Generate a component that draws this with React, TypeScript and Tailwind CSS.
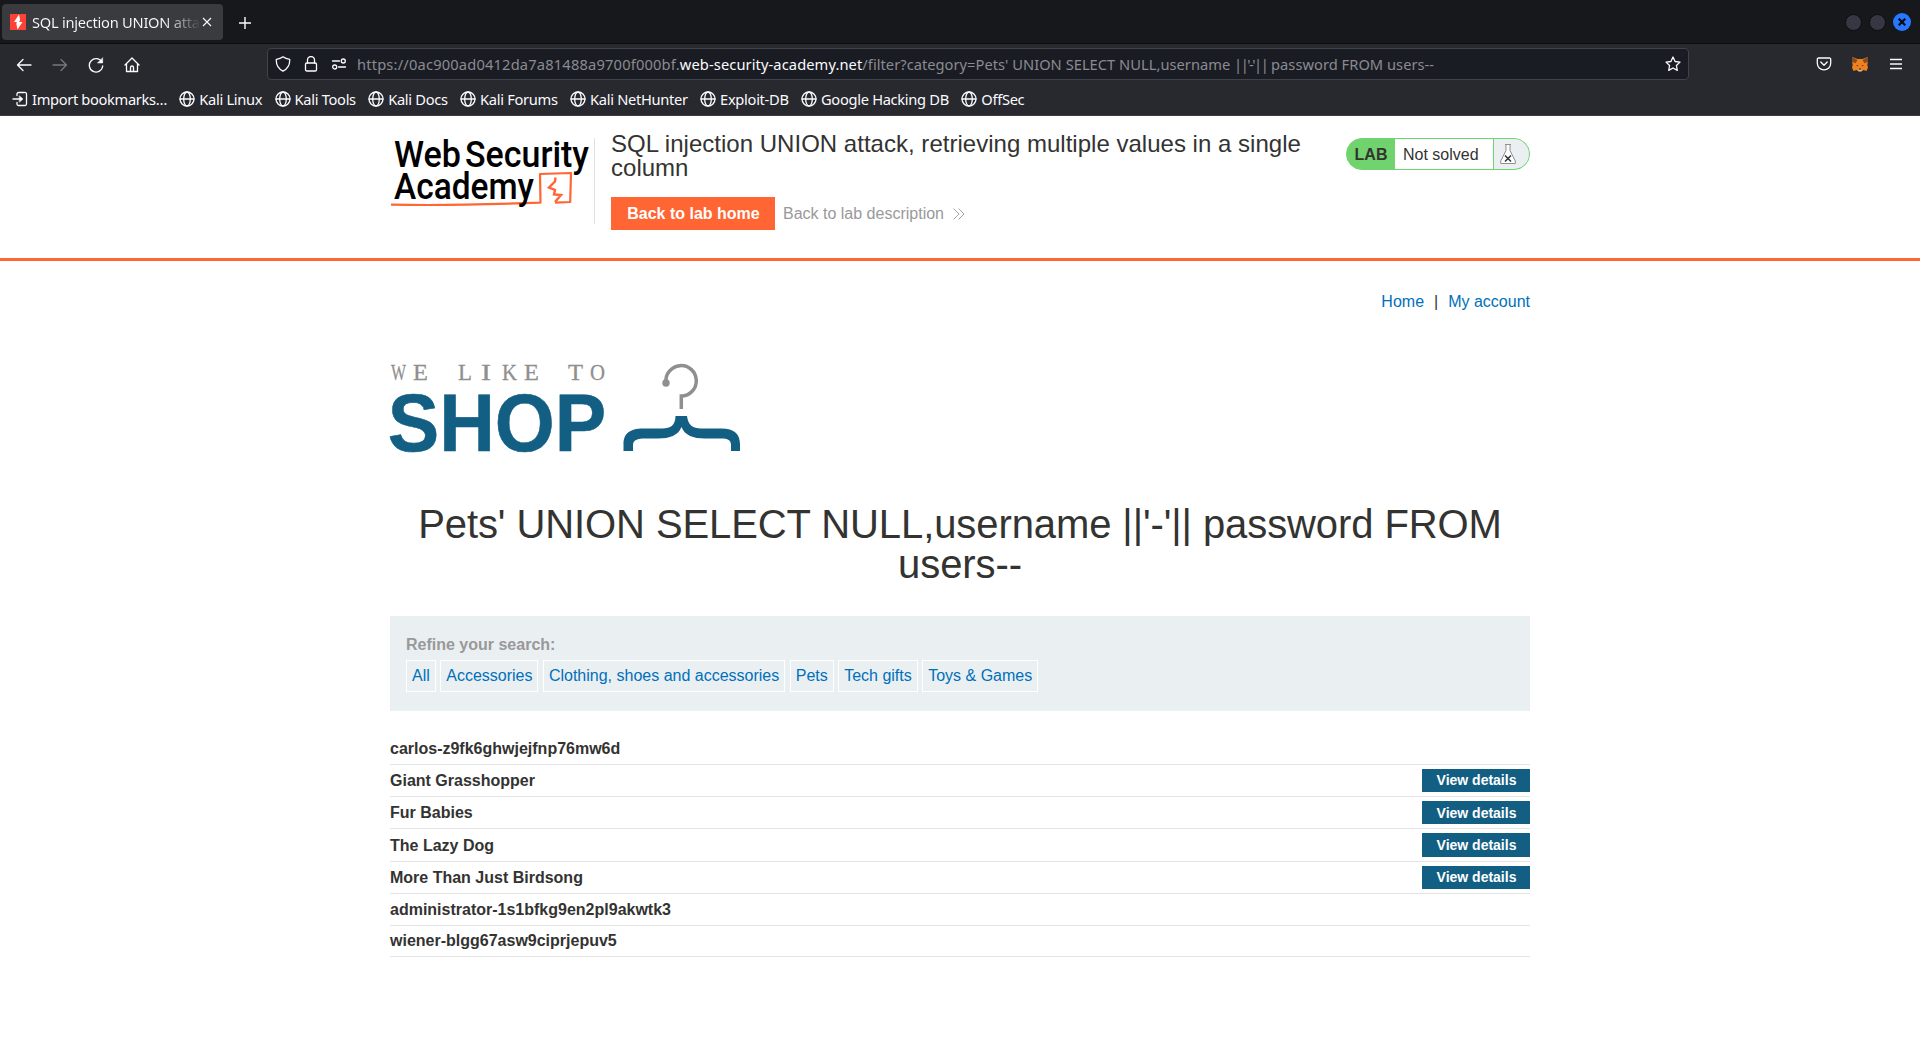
import type { ReactNode } from "react";

const bookmarks = [
  "Kali Linux",
  "Kali Tools",
  "Kali Docs",
  "Kali Forums",
  "Kali NetHunter",
  "Exploit-DB",
  "Google Hacking DB",
  "OffSec",
];

const categories = [
  "All",
  "Accessories",
  "Clothing, shoes and accessories",
  "Pets",
  "Tech gifts",
  "Toys & Games",
];

const rows = [
  { name: "carlos-z9fk6ghwjejfnp76mw6d", details: false, size: "h-8", button: "" },
  { name: "Giant Grasshopper", details: true, size: "h-8", button: "h-[23px] leading-[22px]" },
  { name: "Fur Babies", details: true, size: "h-8", button: "h-[23px] leading-6" },
  { name: "The Lazy Dog", details: true, size: "h-[33px] pt-px", button: "mb-px h-6 leading-6" },
  { name: "More Than Just Birdsong", details: true, size: "h-8", button: "h-[23px] leading-[22px]" },
  { name: "administrator-1s1bfkg9en2pl9akwtk3", details: false, size: "h-8", button: "" },
  { name: "wiener-blgg67asw9ciprjepuv5", details: false, size: "h-[31px]", button: "" },
];

function Icon({ children, className = "" }: { children: ReactNode; className?: string }) {
  return (
    <svg
      viewBox="0 0 16 16"
      className={`size-4 shrink-0 ${className}`}
      fill="none"
      stroke="currentColor"
      strokeWidth="1.3"
      strokeLinecap="round"
      strokeLinejoin="round"
    >
      {children}
    </svg>
  );
}

function Globe() {
  return (
    <Icon>
      <circle cx="8" cy="8" r="7" />
      <ellipse cx="8" cy="8" rx="3.3" ry="7" />
      <path d="M1 8h14" />
    </Icon>
  );
}

function TabStrip() {
  return (
    <div className="flex h-11 items-start justify-between border-b border-[#0c0c10] bg-[#17181c]">
      <div className="flex">
        <div className="mt-1 ml-0.5 flex h-9 w-[221px] items-center rounded bg-[#3a3b3f] pl-2">
          <svg viewBox="0 0 16 16" className="size-4 shrink-0">
            <rect width="16" height="16" fill="#ff4236" />
            <path d="M9 0.5L4 8h3.2L6.3 9.8 7.5 15.5 12.5 8H9.2l1-2z" fill="#fff" />
            <path d="M6.500 8L9 8.200 8 11" fill="none" stroke="#fff" />
          </svg>
          <div className="ml-[6px] w-[169px] overflow-hidden whitespace-nowrap bg-linear-to-r from-[#fbfbfe] from-78% to-transparent to-100% bg-clip-text tracking-[-0.26px] text-transparent">
            SQL injection UNION attack, retrieving
          </div>
          <svg viewBox="0 0 10 10" className="ml-px size-2.5 shrink-0" stroke="#fbfbfe" strokeWidth="1.1">
            <path d="M1 1l8 8M9 1L1 9" />
          </svg>
        </div>
        <svg viewBox="0 0 12 12" className="mt-[17px] ml-4 size-3" stroke="#fbfbfe" strokeWidth="1.4">
          <path d="M6 0v12M0 6h12" />
        </svg>
      </div>
      <div className="mt-[13px] mr-[9px] flex items-center gap-[7px]">
        <span className="size-[17px] rounded-full border border-[#0c0c10] bg-[#363742]" />
        <span className="size-[17px] rounded-full border border-[#0c0c10] bg-[#363742]" />
        <span className="flex size-[18px] items-center justify-center rounded-full bg-[#2777ff]">
          <svg viewBox="0 0 8 8" className="size-2" stroke="#0c0c10" strokeWidth="2.2">
            <path d="M0.7 0.7l6.6 6.6M7.3 0.7L0.7 7.3" />
          </svg>
        </span>
      </div>
    </div>
  );
}

function Toolbar() {
  return (
    <div className="flex h-10 items-center">
      <div className="flex w-[267px] items-center gap-5 pl-4 pt-px">
        <Icon><path d="M15 8H1.5M7 2.5L1.5 8 7 13.5" /></Icon>
        <Icon className="text-[#77777b]"><path d="M1 8h13.500M9 2.500L14.500 8 9 13.500" /></Icon>
        <Icon>
          <path d="M14 5.300A6.700 6.700 0 1 0 14.700 9" />
          <path d="M14.700 1v5H9.700z" fill="currentColor" strokeWidth=".5" />
        </Icon>
        <Icon>
          <path d="M1 8L8 1l7 7M2.500 7v7.500h11V7M6.500 14.500V10.500a1.500 1.500 0 0 1 3 0v4" />
        </Icon>
      </div>
      <div className="flex h-8 w-[1422px] items-center rounded border border-[#42434a] bg-[#1a1c23] pr-[7px] pl-[7px]">
        <Icon><path d="M8 .8C10 2.400 12 3 14.700 3.300 15 8.500 12.500 13 8 15.200 3.500 13 1 8.500 1.300 3.300 4 3 6 2.400 8 .8z" /></Icon>
        <Icon className="ml-3">
          <rect x="2.500" y="7" width="11" height="8" rx="1.300" />
          <path d="M4.500 7V4a3.500 3.500 0 0 1 7 0v3" />
        </Icon>
        <Icon className="ml-3">
          <path d="M1.500 5h7M7.500 11h7" />
          <circle cx="12.300" cy="5" r="2" />
          <circle cx="3.700" cy="11" r="2" />
        </Icon>
        <div className="ml-[10px] flex-1 whitespace-pre text-[#8b8b91]">
          <span className="tracking-[0.18px]">https://0ac900ad0412da7a81488a9700f000bf.</span>
          <span className="tracking-[0.1px] text-[#fbfbfe]">web-security-academy.net</span>
          <span className="tracking-[0.03px]">{"/filter?category=Pets' UNION SELECT NULL,username "}</span>
          <span className="tracking-[-1.5px]">{"||'-'||"}</span>
          <span className="tracking-[0.03px]">{" password FROM users--"}</span>
        </div>
        <Icon>
          <path d="M8 1l2.100 4.500 4.900.6-3.600 3.400.9 4.900L8 12l-4.300 2.400.9-4.900L1 6.100l4.900-.6z" />
        </Icon>
      </div>
      <div className="ml-auto flex items-center gap-5 pr-4">
        <Icon>
          <path d="M2.500 2h11a1.200 1.200 0 0 1 1.200 1.200v4a6.700 6.700 0 0 1-13.400 0v-4A1.200 1.200 0 0 1 2.500 2zM4.800 6L8 9.200 11.200 6" />
        </Icon>
        <svg viewBox="0 0 16 16" className="size-4">
          <path d="M0 1l5.500 2h5L16 1v4.500L15.300 9l.7 2.500-1.500 3.500-3-1L9.500 15.500h-3L4.500 14l-3 1L0 11.500.7 9 0 5.500z" fill="#f0811f" />
          <path d="M0 1l5.500 3L3.500 7.200 0 6zM16 1l-5.500 3 2 3.200L16 6z" fill="#8a4a20" />
          <path d="M3.800 9l2.500.5L6 10.600zM12.200 9l-2.500.5.3 1.100z" fill="#2f3840" />
          <path d="M6.300 13h3.400l-.3 2.300H6.600z" fill="#d5c3b4" />
          <path d="M6.800 12.500h2.400v1.200H6.800z" fill="#2f3840" />
        </svg>
        <Icon><path d="M2 3.500h12M2 8h12M2 12.500h12" strokeLinecap="butt" /></Icon>
      </div>
    </div>
  );
}

function Bookmarks() {
  return (
    <div className="flex h-8 items-center gap-[12.3px] border-b border-[#3e3a45] pb-px pl-3 tracking-[-0.3px] whitespace-nowrap">
      <div className="flex items-center gap-1 tracking-[-0.34px]">
        <Icon>
          <path d="M5 4.500V3a1.500 1.500 0 0 1 1.500-1.500h6A1.500 1.500 0 0 1 14.500 3v10a1.500 1.500 0 0 1-1.500 1.500H6.500A1.500 1.500 0 0 1 5 13v-1.500M1 8h8" />
          <path d="M7.500 5L11 8l-3.500 3z" fill="currentColor" strokeWidth=".6" />
        </Icon>
        Import bookmarks…
      </div>
      {bookmarks.map((b) => (
        <div key={b} className="flex items-center gap-1">
          <Globe />
          {b}
        </div>
      ))}
    </div>
  );
}

function AcademyLogo() {
  return (
    <svg viewBox="0 0 204 86" className="h-[86px] w-[204px] shrink-0 overflow-visible" fontFamily="Roboto, sans-serif" fontWeight="500" fontSize="37">
      <path d="M1 66.600c40 1 90 .2 149.500-2L150 36l31-1-.8 29-15.200.7" fill="none" stroke="#ff6633" strokeWidth="2.200" strokeLinejoin="round" />
      <path d="M165.500 39.500L165 43.500 159 49.500 165 52 164 56.500 171 57 165 64" fill="none" stroke="#ff6633" strokeWidth="2.400" />
      <text x="4" y="28.500" textLength="67" lengthAdjust="spacingAndGlyphs">Web</text>
      <text x="75" y="28.500" textLength="124" lengthAdjust="spacingAndGlyphs">Security</text>
      <text x="4" y="61" textLength="140" lengthAdjust="spacingAndGlyphs">Academy</text>
    </svg>
  );
}

function LabHeader() {
  return (
    <header className="h-[145px] border-b-3 border-[#ff6633]">
      <div className="mx-auto flex w-[1140px]">
        <div className="mt-[22px] h-[86px] w-[205px] border-r border-[#e0e0e2]">
          <AcademyLogo />
        </div>
        <div className="mt-4 ml-4 w-[720px]">
          <h2 className="text-2xl leading-6 tracking-[0.017px]">
            SQL injection UNION attack, retrieving multiple values in a single column
          </h2>
          <div className="mt-[17px] flex items-center">
            <a className="flex h-[33px] w-[164px] items-center justify-center bg-[#ff6633] pl-px font-bold text-white">
              Back to lab home
            </a>
            <a className="ml-2 flex items-center text-[#999999]">
              Back to lab description
              <svg viewBox="0 0 14 14" className="ml-2 size-3.5" fill="none" stroke="#a5a5a5" strokeWidth="1">
                <path d="M1.500 1.500L7 7 1.500 12.500M6.500 1.500L12 7 6.500 12.500" />
              </svg>
            </a>
          </div>
        </div>
        <div className="mt-[22px] ml-auto flex h-8 w-[184px] overflow-hidden rounded-full border border-[#71d36d] bg-[#71d36d]">
          <span className="flex w-12 items-center justify-center pt-0.5 font-bold">LAB</span>
          <span className="flex w-[98px] items-center bg-white pt-px pl-2">Not solved</span>
          <span className="ml-px flex flex-1 items-center bg-[#ebeff2] pl-1.5">
            <svg viewBox="0 0 16 20" className="h-5 w-4" fill="none" stroke="#8e8f90" strokeWidth="1">
              <path d="M5 .5h6M6 .5v6L.7 17v2.500h14.600V17L10 6.500v-6" fill="#fff" />
              <path d="M5 11.500l6 6M11 11.500l-6 6" stroke="#333" strokeWidth="1.500" />
            </svg>
          </span>
        </div>
      </div>
    </header>
  );
}

const tagline: [string, number, number][] = [
  ["W", 1, 15],
  ["E ", 23, 15],
  ["L", 68, 14],
  ["I", 91, 10],
  ["K", 112, 15],
  ["E ", 134, 15],
  ["T", 178, 15],
  ["O", 200, 15],
];

function ShopLogo() {
  return (
    <svg viewBox="0 0 352 90" className="h-[90px] w-[352px] overflow-visible">
      <text y="17" fontFamily="'Liberation Serif', serif" fontSize="24" fill="#8f8f8f" stroke="#8f8f8f" strokeWidth=".3">
        {tagline.map(([glyph, x, width]) => (
          <tspan key={x} x={x} textLength={glyph.length > 1 ? width + 6 : width} lengthAdjust="spacingAndGlyphs">
            {glyph}
          </tspan>
        ))}
      </text>
      <text x="-2.300" y="88" fontFamily="'Liberation Sans', sans-serif" fontWeight="700" fontSize="81" textLength="218.500" lengthAdjust="spacingAndGlyphs" fill="#125f83" stroke="#125f83" strokeWidth=".6">
        SHOP
      </text>
      <g fill="none" stroke="#8f8f8f" strokeWidth="3.500">
        <path d="M276 19.500A15.200 15.200 0 1 1 291.300 33V46" />
      </g>
      <circle cx="276" cy="20" r="3.700" fill="#8f8f8f" />
      <path d="M286.500 53h10.500c1 9 6 12.500 14 12.500h20c14 0 19 6 19 16v6.500h-9v-6c0-5-3-6.500-10-6.500h-16c-12 0-20-3-23.500-11.500-3.500 8.500-11.500 11.500-23.500 11.500h-12c-9 0-13 1.500-13 7v5.500h-9.500v-6.500c0-10 5-16 20-16h19c8 0 13-3.500 13-12.500z" fill="#125f83" />
    </svg>
  );
}

export default function App() {
  return (
    <div className="h-[1051px] overflow-hidden bg-white">
      <div className="bg-[#28292e] font-['Noto_Sans',sans-serif] text-[14.667px] leading-5 text-[#fbfbfe]">
        <TabStrip />
        <Toolbar />
        <Bookmarks />
      </div>
      <div className="font-['Liberation_Sans',Arial,sans-serif] text-base leading-5 text-[#333332]">
        <LabHeader />
        <main className="mx-auto w-[1140px]">
          <nav className="flex h-20 items-center justify-end pt-0.5 text-[#0070ba]">
            <a>Home</a>
            <span className="mx-2.5 text-[#333332]">|</span>
            <a>My account</a>
          </nav>
          <div className="mt-[22px]">
            <ShopLogo />
          </div>
          <h1 className="mt-[51px] text-center text-[40px] leading-10 tracking-[-0.09px]">
            Pets' UNION SELECT NULL,username ||'-'|| password FROM users--
          </h1>
          <section className="mt-8 h-[95px] bg-[#eaeff2] px-4 pt-[19px]">
            <p className="font-bold text-[#999999]">Refine your search:</p>
            <div className="mt-[5px] flex gap-[4.45px]">
              {categories.map((c) => (
                <a key={c} className="flex h-8 items-center border border-white px-[5px] text-[#0070ba]">
                  {c}
                </a>
              ))}
            </div>
          </section>
          <div className="mt-[22px]">
            {rows.map((r) => (
              <div key={r.name} className={`flex items-center justify-between border-b border-[#e3e3e3] ${r.size}`}>
                <span className="font-bold">{r.name}</span>
                {r.details && (
                  <a className={`w-[108px] bg-[#125f83] pl-px text-center text-sm font-bold text-white ${r.button}`}>
                    View details
                  </a>
                )}
              </div>
            ))}
          </div>
        </main>
      </div>
    </div>
  );
}
